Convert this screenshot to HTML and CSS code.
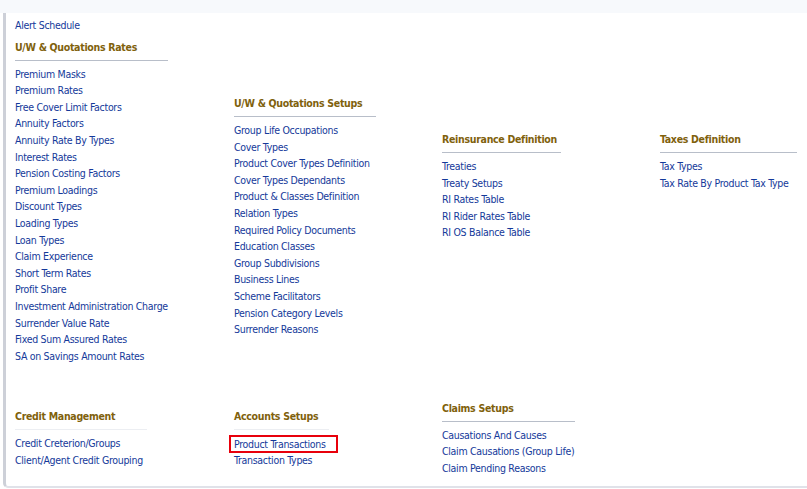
FILE: index.html
```html
<!DOCTYPE html>
<html>
<head>
<meta charset="utf-8">
<link rel="stylesheet" href="styles.css">
</head>
<body>
<div class="topband"></div>
<div class="frame">
  <div class="grid">
    <div class="col col1">
      <ul class="items"><li><a href="#">Alert Schedule</a></li></ul>
      <div class="section w153">
        <h3>U/W &amp; Quotations Rates</h3>
        <ul class="items">
          <li><a href="#">Premium Masks</a></li>
          <li><a href="#">Premium Rates</a></li>
          <li><a href="#">Free Cover Limit Factors</a></li>
          <li><a href="#">Annuity Factors</a></li>
          <li><a href="#">Annuity Rate By Types</a></li>
          <li><a href="#">Interest Rates</a></li>
          <li><a href="#">Pension Costing Factors</a></li>
          <li><a href="#">Premium Loadings</a></li>
          <li><a href="#">Discount Types</a></li>
          <li><a href="#">Loading Types</a></li>
          <li><a href="#">Loan Types</a></li>
          <li><a href="#">Claim Experience</a></li>
          <li><a href="#">Short Term Rates</a></li>
          <li><a href="#">Profit Share</a></li>
          <li><a href="#">Investment Administration Charge</a></li>
          <li><a href="#">Surrender Value Rate</a></li>
          <li><a href="#">Fixed Sum Assured Rates</a></li>
          <li><a href="#">SA on Savings Amount Rates</a></li>
        </ul>
      </div>
    </div>
    <div class="col col2">
      <div class="section w142">
        <h3>U/W &amp; Quotations Setups</h3>
        <ul class="items">
          <li><a href="#">Group Life Occupations</a></li>
          <li><a href="#">Cover Types</a></li>
          <li><a href="#">Product Cover Types Definition</a></li>
          <li><a href="#">Cover Types Dependants</a></li>
          <li><a href="#">Product &amp; Classes Definition</a></li>
          <li><a href="#">Relation Types</a></li>
          <li><a href="#">Required Policy Documents</a></li>
          <li><a href="#">Education Classes</a></li>
          <li><a href="#">Group Subdivisions</a></li>
          <li><a href="#">Business Lines</a></li>
          <li><a href="#">Scheme Facilitators</a></li>
          <li><a href="#">Pension Category Levels</a></li>
          <li><a href="#">Surrender Reasons</a></li>
        </ul>
      </div>
    </div>
    <div class="col col3">
      <div class="section w119">
        <h3>Reinsurance Definition</h3>
        <ul class="items">
          <li><a href="#">Treaties</a></li>
          <li><a href="#">Treaty Setups</a></li>
          <li><a href="#">RI Rates Table</a></li>
          <li><a href="#">RI Rider Rates Table</a></li>
          <li><a href="#">RI OS Balance Table</a></li>
        </ul>
      </div>
    </div>
    <div class="col col4">
      <div class="section w137">
        <h3>Taxes Definition</h3>
        <ul class="items">
          <li><a href="#">Tax Types</a></li>
          <li><a href="#">Tax Rate By Product Tax Type</a></li>
        </ul>
      </div>
    </div>
  </div>
  <div class="grid bottom">
    <div class="col">
      <div class="section faint w132">
        <h3>Credit Management</h3>
        <ul class="items">
          <li><a href="#">Credit Creterion/Groups</a></li>
          <li><a href="#">Client/Agent Credit Grouping</a></li>
        </ul>
      </div>
    </div>
    <div class="col">
      <div class="section faint w95">
        <h3>Accounts Setups</h3>
        <ul class="items">
          <li><a href="#" class="marked">Product Transactions</a></li>
          <li><a href="#">Transaction Types</a></li>
        </ul>
      </div>
    </div>
    <div class="col">
      <div class="section w133">
        <h3>Claims Setups</h3>
        <ul class="items">
          <li><a href="#">Causations And Causes</a></li>
          <li><a href="#">Claim Causations (Group Life)</a></li>
          <li><a href="#">Claim Pending Reasons</a></li>
        </ul>
      </div>
    </div>
    <div class="col"></div>
  </div>
</div>
</body>
</html>
```

FILE: styles.css
```css
html, body {
  margin: 0;
  padding: 0;
  background: #ffffff;
  height: 489px;
  overflow: hidden;
}
body {
  font-family: "DejaVu Sans Condensed", "DejaVu Sans", sans-serif;
  font-stretch: condensed;
  font-size: 10.5px;
  letter-spacing: -0.3px;
  color: #14399a;
}
.topband {
  height: 13px;
  background: #f7f9fc;
}
.frame {
  margin-left: 3px;
  height: 473px;
  border-left: 3px solid #cdd0d8;
  border-bottom: 2px solid #e0e2e9;
  border-bottom-left-radius: 5px;
  padding-left: 9px;
  box-sizing: content-box;
}
.grid {
  display: grid;
  grid-template-columns: 219px 208px 218px 1fr;
  align-items: start;
}
.col1 { padding-top: 4px; }
.col2 { padding-top: 82px; }
.col3, .col4 { padding-top: 118px; }
.col1 .section { margin-top: 5px; }
.grid.bottom {
  margin-top: 35.6px;
  align-items: center;
}
.section h3 {
  margin: 0 0 5px 0;
  padding: 0 0 5px 0;
  font-size: 10.5px;
  line-height: 16px;
  font-weight: bold;
  color: #80610c;
  border-bottom: 1px solid #b8bec9;
  white-space: nowrap;
}
.section.faint h3 {
  border-bottom-color: #eceef2;
}
.w153 { width: 153px; }
.w142 { width: 142px; }
.w119 { width: 119px; }
.w137 { width: 137px; }
.w132 { width: 132px; }
.w95 { width: 95px; }
.w133 { width: 133px; }
.items {
  list-style: none;
  margin: 0;
  padding: 0;
}
.items li {
  line-height: 16.6px;
  height: 16.6px;
  white-space: nowrap;
}
.items a {
  color: #14399a;
  text-decoration: none;
}
.items a.marked {
  display: inline-block;
  margin-left: -5px;
  padding: 0 10px 0 3px;
  line-height: 14px;
  border: 2px solid #e8000b;
}
```
